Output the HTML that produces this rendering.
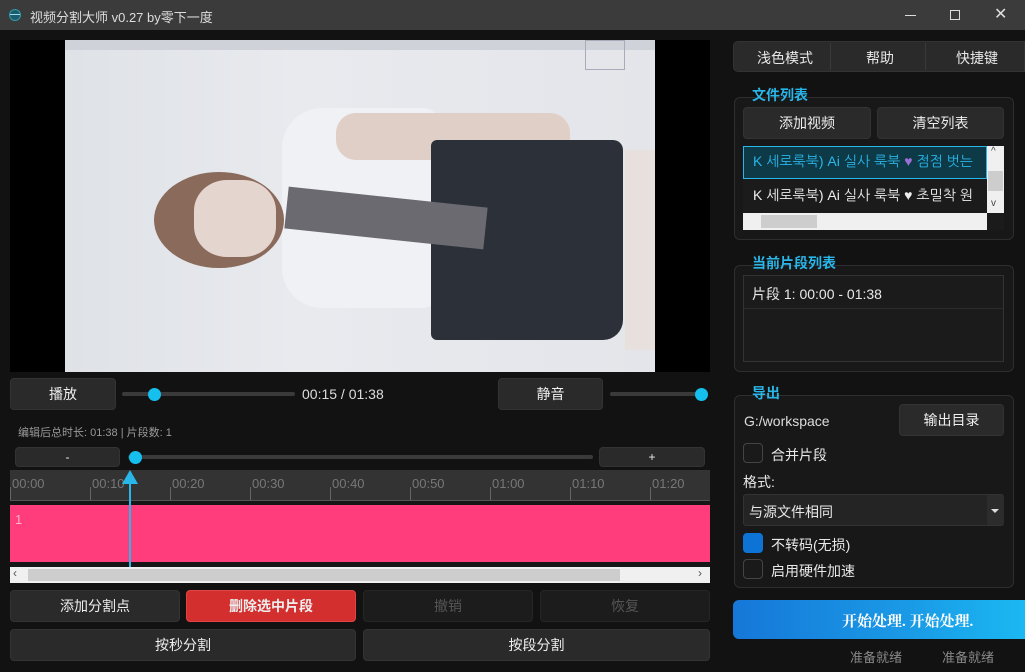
<!DOCTYPE html>
<html><head><meta charset="utf-8"><style>
*{margin:0;padding:0;box-sizing:border-box}
body{width:1025px;height:672px;background:#121212;position:relative;overflow:hidden;font-family:"Liberation Sans","Noto Sans CJK SC",sans-serif;color:#e8e8e8;font-size:14px}
.a{position:absolute}
.btn{position:absolute;background:#2a2a2a;border:1px solid #333;border-radius:4px;display:flex;align-items:center;justify-content:center;font-size:14px;color:#eee}
.dis{background:#1c1c1c;color:#555;border-color:#262626}
.grp{position:absolute;border:1px solid #2e2e2e;border-radius:6px;background:#181818}
.gt{position:absolute;color:#29b6e8;font-weight:bold;font-size:14px}
.cb{position:absolute;width:20px;height:20px;border:1px solid #444;border-radius:4px;background:#1a1a1a}
.tick{position:absolute;top:487px;width:1px;height:13px;background:#666}
.tl{position:absolute;top:476px;font-size:13px;color:#777}
</style></head><body>
<!-- title bar -->
<div class="a" style="left:0;top:0;width:1025px;height:30px;background:#3b3b3b"></div>
<div class="a" style="left:9px;top:9px;width:12px;height:12px;border-radius:50%;background:#1c5c6c;border:1px solid #39a;"></div>
<div class="a" style="left:10px;top:14px;width:10px;height:1px;background:#9de"></div>
<div class="a" style="left:30px;top:7px;font-size:13px;color:#ddd">视频分割大师 v0.27 by零下一度</div>
<div class="a" style="left:905px;top:15px;width:11px;height:1px;background:#ddd"></div>
<div class="a" style="left:950px;top:10px;width:10px;height:10px;border:1px solid #ddd"></div>
<div class="a" style="left:994px;top:4px;font-size:16px;color:#ddd">✕</div>

<!-- video -->
<div class="a" style="left:10px;top:40px;width:700px;height:332px;background:#000"></div>
<div class="a" style="left:65px;top:40px;width:590px;height:332px;background:linear-gradient(90deg,#dfe2e7,#e8eaee 40%,#e3e5ea);overflow:hidden">
 <div class="a" style="left:0;top:0;width:590px;height:10px;background:#cfd2d8"></div>
 <div class="a" style="left:520px;top:0;width:40px;height:30px;border:1px solid #aab"></div>
 <div class="a" style="left:217px;top:68px;width:160px;height:200px;background:#f0f1f4;border-radius:40px 20px 20px 40px"></div>
 <div class="a" style="left:271px;top:73px;width:234px;height:47px;background:#e0cfc6;border-radius:20px"></div>
 <div class="a" style="left:89px;top:132px;width:130px;height:96px;background:#8a6a5a;border-radius:50%"></div>
 <div class="a" style="left:129px;top:140px;width:82px;height:77px;background:#e5d5cf;border-radius:40%"></div>
 <div class="a" style="left:366px;top:100px;width:192px;height:200px;background:#2c3038;border-radius:6px 10px 20px 6px"></div>
 <div class="a" style="left:221px;top:157px;width:200px;height:42px;background:#6a6a70;transform:rotate(6deg)"></div>
 <div class="a" style="left:560px;top:110px;width:30px;height:200px;background:#e7e0dc"></div>
</div>

<!-- playback row -->
<div class="btn" style="left:10px;top:378px;width:106px;height:32px">播放</div>
<div class="a" style="left:122px;top:392px;width:173px;height:4px;background:#3a3a3a;border-radius:2px"></div>
<div class="a" style="left:148px;top:388px;width:13px;height:13px;border-radius:50%;background:#16c0ee"></div>
<div class="a" style="left:302px;top:386px;font-size:14px;color:#ddd">00:15 / 01:38</div>
<div class="btn" style="left:498px;top:378px;width:105px;height:32px">静音</div>
<div class="a" style="left:610px;top:392px;width:96px;height:4px;background:#3a3a3a;border-radius:2px"></div>
<div class="a" style="left:695px;top:388px;width:13px;height:13px;border-radius:50%;background:#16c0ee"></div>

<div class="a" style="left:18px;top:424px;font-size:11px;color:#999">编辑后总时长: 01:38 | 片段数: 1</div>
<div class="btn" style="left:15px;top:447px;width:105px;height:20px;font-size:12px">-</div>
<div class="a" style="left:128px;top:455px;width:465px;height:4px;background:#3a3a3a;border-radius:2px"></div>
<div class="a" style="left:129px;top:451px;width:13px;height:13px;border-radius:50%;background:#16c0ee"></div>
<div class="btn" style="left:599px;top:447px;width:106px;height:20px;font-size:12px">+</div>

<!-- timeline -->
<div class="a" style="left:10px;top:470px;width:700px;height:31px;background:#333"></div>
<div class="a" style="left:10px;top:500px;width:700px;height:1px;background:#555"></div>
<div class="tl" style="left:12px">00:00</div><div class="tl" style="left:92px">00:10</div><div class="tl" style="left:172px">00:20</div><div class="tl" style="left:252px">00:30</div><div class="tl" style="left:332px">00:40</div><div class="tl" style="left:412px">00:50</div><div class="tl" style="left:492px">01:00</div><div class="tl" style="left:572px">01:10</div><div class="tl" style="left:652px">01:20</div>
<div class="tick" style="left:10px"></div><div class="tick" style="left:90px"></div><div class="tick" style="left:170px"></div><div class="tick" style="left:250px"></div><div class="tick" style="left:330px"></div><div class="tick" style="left:410px"></div><div class="tick" style="left:490px"></div><div class="tick" style="left:570px"></div><div class="tick" style="left:650px"></div>
<div class="a" style="left:10px;top:501px;width:700px;height:66px;background:#161616"></div>
<div class="a" style="left:10px;top:505px;width:700px;height:57px;background:#ff3d7d"></div>
<div class="a" style="left:15px;top:512px;font-size:13px;color:#ffb0c8">1</div>
<div class="a" style="left:129px;top:476px;width:2px;height:92px;background:#29b6e8"></div>
<div class="a" style="left:122px;top:470px;width:0;height:0;border-left:8px solid transparent;border-right:8px solid transparent;border-bottom:14px solid #29b6e8"></div>
<div class="a" style="left:10px;top:567px;width:700px;height:16px;background:#f0f0f0"></div>
<div class="a" style="left:28px;top:569px;width:592px;height:12px;background:#cdcdcd"></div>
<div class="a" style="left:13px;top:566px;font-size:12px;color:#555">‹</div>
<div class="a" style="left:698px;top:566px;font-size:12px;color:#555">›</div>

<div class="btn" style="left:10px;top:590px;width:170px;height:32px">添加分割点</div>
<div class="btn" style="left:186px;top:590px;width:170px;height:32px;background:#d32f2f;border-color:#e04444;font-weight:bold">删除选中片段</div>
<div class="btn dis" style="left:363px;top:590px;width:170px;height:32px">撤销</div>
<div class="btn dis" style="left:540px;top:590px;width:170px;height:32px">恢复</div>
<div class="btn" style="left:10px;top:629px;width:346px;height:32px">按秒分割</div>
<div class="btn" style="left:363px;top:629px;width:347px;height:32px">按段分割</div>

<!-- right panel -->
<div class="a" style="left:733px;top:41px;width:292px;height:31px;background:#2a2a2a;border-radius:5px 0 0 5px;border:1px solid #333"></div>
<div class="a" style="left:830px;top:43px;width:1px;height:27px;background:#3a3a3a"></div>
<div class="a" style="left:925px;top:43px;width:1px;height:27px;background:#3a3a3a"></div>
<div class="a" style="left:757px;top:48px;font-size:14px">浅色模式</div>
<div class="a" style="left:866px;top:48px;font-size:14px">帮助</div>
<div class="a" style="left:956px;top:48px;font-size:14px">快捷键</div>

<div class="grp" style="left:734px;top:97px;width:280px;height:143px"></div>
<div class="gt" style="left:752px;top:85px">文件列表</div>
<div class="btn" style="left:743px;top:107px;width:128px;height:32px">添加视频</div>
<div class="btn" style="left:877px;top:107px;width:127px;height:32px">清空列表</div>
<div class="a" style="left:743px;top:146px;width:261px;height:84px;background:#1b1b1b;overflow:hidden">
 <div class="a" style="left:0;top:0;width:244px;height:33px;background:#0e3947;border:1px solid #29b6e8"></div>
 <div class="a" style="left:10px;top:7px;white-space:nowrap;color:#29b6e8;font-size:14px;font-family:'Liberation Sans','NanumGothic',sans-serif">K 세로룩북) Ai 실사 룩북 <span style="color:#9a6fd6">♥</span> 점점 벗는</div>
 <div class="a" style="left:10px;top:41px;white-space:nowrap;color:#eee;font-size:14px;font-family:'Liberation Sans','NanumGothic',sans-serif">K 세로룩북) Ai 실사 룩북 ♥ 초밀착 원</div>
 <div class="a" style="left:244px;top:0;width:17px;height:67px;background:#f0f0f0"></div>
 <div class="a" style="left:245px;top:25px;width:15px;height:20px;background:#cdcdcd"></div>
 <div class="a" style="left:0;top:67px;width:244px;height:17px;background:#f0f0f0"></div>
 <div class="a" style="left:18px;top:69px;width:56px;height:13px;background:#cdcdcd"></div>
 <div class="a" style="left:248px;top:0;font-size:10px;color:#444">^</div>
 <div class="a" style="left:248px;top:52px;font-size:10px;color:#444">v</div>
</div>

<div class="grp" style="left:734px;top:265px;width:280px;height:107px"></div>
<div class="gt" style="left:752px;top:253px">当前片段列表</div>
<div class="a" style="left:743px;top:275px;width:261px;height:87px;border:1px solid #333;background:#1b1b1b"></div>
<div class="a" style="left:744px;top:308px;width:259px;height:1px;background:#2c2c2c"></div>
<div class="a" style="left:752px;top:284px;font-size:14px">片段 1: 00:00 - 01:38</div>

<div class="grp" style="left:734px;top:395px;width:280px;height:193px"></div>
<div class="gt" style="left:752px;top:383px">导出</div>
<div class="a" style="left:744px;top:413px;font-size:14px;color:#ddd">G:/workspace</div>
<div class="btn" style="left:899px;top:404px;width:105px;height:32px">输出目录</div>
<div class="cb" style="left:743px;top:443px"></div>
<div class="a" style="left:771px;top:445px">合并片段</div>
<div class="a" style="left:743px;top:472px">格式:</div>
<div class="a" style="left:743px;top:494px;width:261px;height:32px;background:#242424;border:1px solid #333;border-radius:3px"></div>
<div class="a" style="left:749px;top:502px">与源文件相同</div>
<div class="a" style="left:987px;top:495px;width:17px;height:30px;background:#2c2c2c"></div>
<div class="a" style="left:991px;top:509px;border-left:4px solid transparent;border-right:4px solid transparent;border-top:4px solid #ddd"></div>
<div class="cb" style="left:743px;top:533px;background:#0d74d6;border-color:#0d74d6"></div>
<div class="a" style="left:771px;top:535px">不转码(无损)</div>
<div class="cb" style="left:743px;top:559px"></div>
<div class="a" style="left:771px;top:561px">启用硬件加速</div>

<div class="a" style="left:733px;top:600px;width:292px;height:39px;border-radius:6px 0 0 6px;background:linear-gradient(90deg,#1677d8,#1a9ae6 60%,#1bb8f2)"></div>
<div class="a" style="left:842px;top:610px;font-size:15px;font-weight:bold;color:#fff;font-family:'Liberation Serif','Noto Serif CJK SC',serif">开始处理. 开始处理.</div>
<div class="a" style="left:850px;top:647px;font-size:13px;color:#888">准备就绪</div>
<div class="a" style="left:942px;top:647px;font-size:13px;color:#888">准备就绪</div>
</body></html>
